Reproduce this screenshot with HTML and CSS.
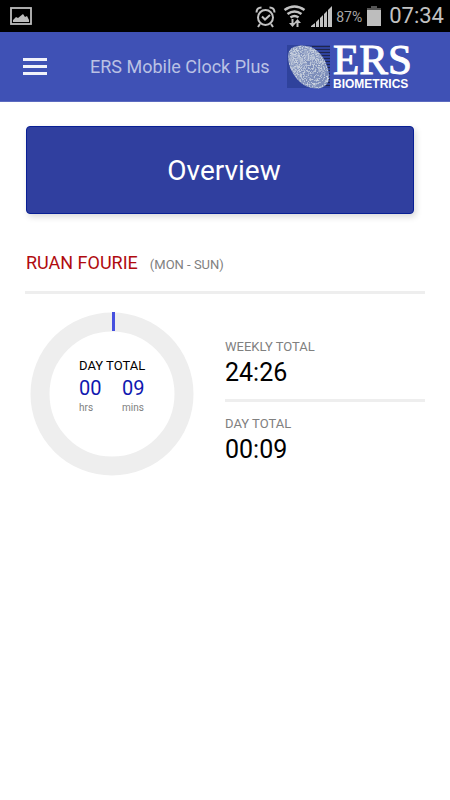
FILE: index.html
```html
<!DOCTYPE html>
<html lang="en">
<head>
<meta charset="utf-8">
<meta name="viewport" content="width=device-width, initial-scale=1">
<title>ERS Mobile Clock Plus</title>
<link rel="stylesheet" href="styles.css">
</head>
<body>
<div class="status">
  <svg class="status-picture" width="22" height="18" viewBox="0 0 22 18" aria-hidden="true">
    <rect x="1" y="1" width="20" height="16" fill="none" stroke="#bdbdbd" stroke-width="1.8"/>
    <path d="M3 15v-2l3-3 2 1 5-4 2 3 2-1 2 4v2z" fill="#bdbdbd"/>
  </svg>
  <svg class="status-icons" width="78" height="24" viewBox="254 4 78 24" aria-hidden="true">
    <g fill="none" stroke="#c2c2c2" stroke-width="2">
      <circle cx="265.500" cy="17.500" r="7.500"/>
      <path d="M262 16.500l3 3 5-4.500M260 24l-2 3M271 24l2 3"/>
      <path d="M256.500 12.500c0-3 2-5 5-5M274.500 12.500c0-3-2-5-5-5"/>
    </g>
    <g fill="none" stroke="#c2c2c2" stroke-width="2.600">
      <path d="M284.500 10q10-7 20 0M287.500 14q7-5 14 0M290.500 17.500q4-3 8 0"/>
      <path d="M292.500 19v5M297.500 27v-5" stroke-width="2"/>
    </g>
    <path d="M289 23h7l-3.500 4zM294 23h7l-3.500-4zM311 27v-1l4-3v4zM316 27v-5l3-3v8zM320 27v-9l3-3v12zM324 27V14l3-3v16zM328 27V10l4-4v21z" fill="#c2c2c2"/>
  </svg>
  <span class="battery-text">87%</span>
  <svg class="battery" width="14" height="20" viewBox="0 0 14 20" aria-hidden="true">
    <path d="M0 2h4V0h6v2h4v18H0z" fill="#bdbdbd"/>
    <path d="M0 2h4V0h6v2h4v2H0z" fill="#555"/>
  </svg>
  <time class="clock">07:34</time>
</div>
<header class="bar">
  <button class="menu" type="button" aria-label="Menu"><span></span><span></span><span></span></button>
  <h1 class="title">ERS Mobile Clock Plus</h1>
  <div class="logo">
    <svg width="44" height="46" viewBox="287 44 44 46" aria-hidden="true">
      <defs>
        <clipPath id="print"><path d="M288 56c0-9 9-12 19-10 11 2 18 12 21 23 3 11 0 17-7 19-9 2-18-2-24-9-6-7-9-15-9-23z"/></clipPath>
        <filter id="grain" x="0" y="0" width="1" height="1">
          <feTurbulence type="fractalNoise" baseFrequency="0.45" numOctaves="2" seed="4" result="noise"/>
          <feDisplacementMap in="SourceGraphic" in2="noise" scale="5" xChannelSelector="R" yChannelSelector="G"/>
        </filter>
      </defs>
      <rect x="287" y="45" width="43" height="43" fill="#2f429c"/>
      <path d="M312 46.500h18M312 49.500h18M312 52.500h18M312 55.500h18M312 58.500h18M312 61.500h18M312 64.500h18M312 67.500h18M312 70.500h18M312 73.500h18M312 76.500h18M312 79.500h18M312 82.500h18M312 85.500h18" stroke="#20264e"/>
      <g clip-path="url(#print)">
        <g filter="url(#grain)">
          <path d="M280 37h58v58h-58z" fill="#7c8dba"/>
          <g class="ridges" transform="rotate(-32 309 64)">
            <ellipse cx="309" cy="62" rx="2" ry="4"/>
            <ellipse cx="309" cy="63" rx="4" ry="7"/>
            <ellipse cx="309" cy="64" rx="6" ry="10"/>
            <ellipse cx="309" cy="65" rx="8" ry="13"/>
            <ellipse cx="309" cy="66" rx="10" ry="16"/>
            <ellipse cx="309" cy="67" rx="12" ry="19"/>
            <ellipse cx="309" cy="68" rx="14" ry="22"/>
            <ellipse cx="309" cy="69" rx="16" ry="25"/>
            <ellipse cx="309" cy="70" rx="18" ry="28"/>
            <ellipse cx="309" cy="71" rx="20" ry="31"/>
          </g>
        </g>
      </g>
    </svg>
    <div class="logo-text">
      <div class="logo-name">ERS</div>
      <div class="logo-sub">BIOMETRICS</div>
    </div>
  </div>
</header>
<main class="page">
  <button class="overview" type="button">Overview</button>
  <div class="person">
    <h2 class="name">RUAN FOURIE</h2>
    <span class="range">(MON - SUN)</span>
  </div>
  <section class="summary">
    <div class="gauge">
      <svg class="ring" viewBox="0 0 164 164" aria-hidden="true">
        <circle cx="82" cy="82" r="72" fill="none" stroke="#eee" stroke-width="19"/>
        <path d="M82 0h3v19h-3z" fill="#4650df"/>
      </svg>
      <div class="reading">
        <div class="reading-title">DAY TOTAL</div>
        <div class="units">
          <div><div class="amount">00</div><div class="unit">hrs</div></div>
          <div><div class="amount">09</div><div class="unit">mins</div></div>
        </div>
      </div>
    </div>
    <dl class="totals">
      <div class="total"><dt>WEEKLY TOTAL</dt><dd>24:26</dd></div>
      <div class="total"><dt>DAY TOTAL</dt><dd>00:09</dd></div>
    </dl>
  </section>
</main>
</body>
</html>
```
FILE: styles.css
```css
* { box-sizing: border-box; }
body {
  margin: 0;
  background: #fff;
  color: #000;
  font-family: Roboto, "Liberation Sans", sans-serif;
}
h1, h2, dl, dd { margin: 0; font-weight: 400; }
button { border: 0; font-family: inherit; cursor: pointer; }
.status {
  display: flex;
  align-items: center;
  height: 32px;
  padding: 0 6px 0 10px;
  background: #000;
  color: #c2c2c2;
}
.status-icons { margin-left: auto; }
.battery-text { margin: 2px 5px 0 4px; font-size: 14px; line-height: 20px; color: #a8a8a8; }
.clock { margin-left: 8px; font-size: 22px; line-height: 32px; }
.bar {
  display: flex;
  align-items: center;
  height: 70px;
  padding: 0 36px 0 23px;
  background: #3f51b5;
  border-bottom: 1px solid #5c6bc0;
}
.menu {
  display: flex;
  flex-direction: column;
  gap: 4px;
  width: 24px;
  padding: 0;
  background: none;
}
.menu span { height: 3px; background: #f1f2fa; }
.title {
  margin-left: 43px;
  font-size: 18px;
  line-height: 24px;
  color: #bac1e4;
  white-space: nowrap;
}
.logo {
  display: flex;
  flex: none;
  align-items: center;
  gap: 2px;
  margin-left: auto;
  color: #fff;
}
.logo-name {
  font-family: "Liberation Serif", serif;
  font-size: 43px;
  line-height: 34px;
  -webkit-text-stroke: 1px #fff;
}
.logo-sub {
  font-family: "Liberation Sans", sans-serif;
  font-size: 12px;
  font-weight: 700;
  line-height: 14px;
}
.logo-text { width: 81px; }
.ridges { fill: none; stroke: #ccd4e0; stroke-width: 1; }
.page { padding: 24px 25px; }
.overview {
  display: block;
  width: calc(100% - 12px);
  height: 88px;
  margin-left: 1px;
  padding: 0 0 0 8px;
  border: 1px solid #081f94;
  border-radius: 4px;
  background: #303f9f;
  box-shadow: 2px 3px 6px rgba(0, 0, 0, 0.15);
  color: #fff;
  font-size: 28px;
}
.person {
  display: flex;
  align-items: baseline;
  gap: 12px;
  margin-top: 36px;
  padding: 0 1px 15px;
  border-bottom: 3px solid #eee;
}
.name { font-size: 18px; line-height: 26px; color: #b00b0f; }
.range { font-size: 13px; color: #808080; }
.summary {
  display: grid;
  grid-template-columns: 1fr 1fr;
  padding-top: 18px;
}
.gauge { display: grid; width: 164px; margin-left: 5px; }
.ring, .reading { grid-area: 1 / 1; }
.ring { width: 100%; }
.reading { padding: 45px 0 0 49px; }
.reading-title { font-size: 13px; line-height: 18px; }
.units { display: grid; grid-template-columns: 43px 42px; }
.amount { font-size: 20px; line-height: 26px; color: #1018b0; }
.unit { font-size: 10px; line-height: 14px; color: #808080; }
.totals { padding-top: 26px; }
.total + .total { margin-top: 9px; padding-top: 13px; border-top: 3px solid #eee; }
.total dt { font-size: 13px; line-height: 18px; color: #808080; }
.total dd { font-size: 25px; line-height: 34px; }
```
